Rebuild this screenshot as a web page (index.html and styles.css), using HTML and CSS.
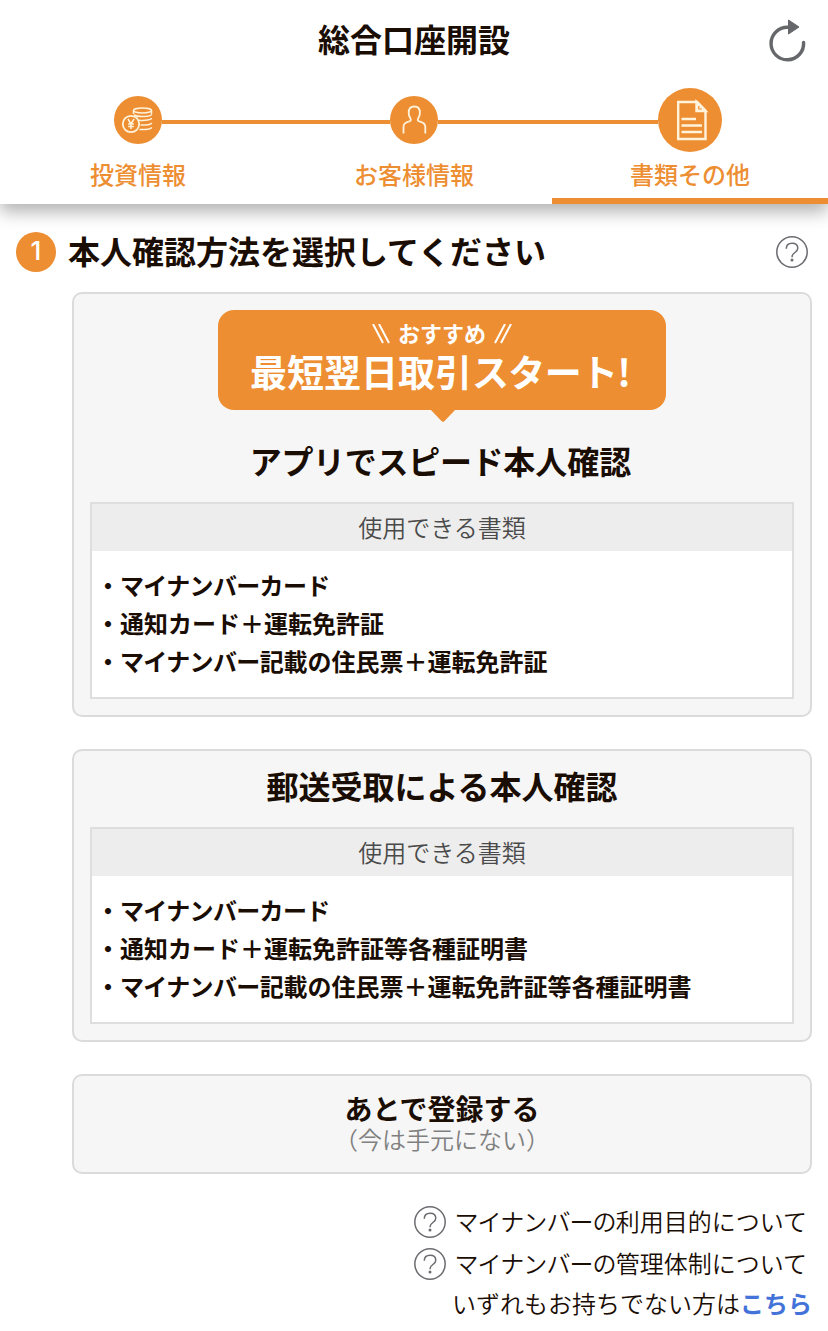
FILE: index.html
```html
<!DOCTYPE html>
<html lang="ja">
<head>
    <meta charset="UTF-8">
    <meta name="viewport" content="width=device-width, initial-scale=1.0">
    <title>総合口座開設</title>
    <link rel="stylesheet" href="styles.css">
</head>
<body>
    <header class="header">
        <h1 class="page-title">総合口座開設</h1>
        <button class="reload-button" aria-label="再読み込み">
            <svg width="40" height="44" viewBox="0 0 40 44">
                <path d="M20 9.200 A16.300 16.300 0 1 0 35.600 24.500" fill="none" stroke="#65676a" stroke-width="3.400" stroke-linecap="round"/>
                <path d="M20.500 2 L31 9 L20.500 16 Z" fill="#65676a" stroke="#65676a" stroke-linejoin="round"/>
            </svg>
        </button>

        <ol class="steps">
            <li class="step">
                <div class="step-marker">
                    <span class="step-circle">
                        <svg width="48" height="48" viewBox="0 0 48 48" fill="none" stroke="#fff3dc" stroke-width="1.5">
                            <ellipse cx="28.5" cy="14.5" rx="9" ry="2.4"/>
                            <path d="M19.500 14.500v3.500M20 19c4 2.300 17.500 1.800 17.500-.8M25 24.300c6 .6 12.500-.4 12.500-2.300M26.500 29c5.500.4 11-.5 11-2.300M25.500 33.500c6 .3 12-.5 12-2.300M37.500 14.500v3.500"/>
                            <circle cx="17" cy="28" r="8.200" stroke-width="1.800"/>
                            <path d="M14 23l3 5 3-5M17 28v5M14.200 28h5.600M14.200 30.500h5.600"/>
                        </svg>
                    </span>
                </div>
                <span class="step-label">投資情報</span>
            </li>
            <li class="step">
                <div class="step-marker">
                    <span class="step-circle">
                        <svg width="48" height="48" viewBox="0 0 48 48" fill="none" stroke="#fff3dc" stroke-width="1.8">
                            <path d="M13.500 37.500v-6.500c0-3.500 2-4.600 5-5.300 2.800-.7 2.900-2 1.500-4.200-1-1.400-1.300-2.700-1.300-4.700 0-3.700 2-6.300 5.600-6.300s5.600 2.600 5.600 6.300c0 2-.3 3.300-1.300 4.700-1.400 2.200-1.300 3.500 1.500 4.200 3 .7 5.200 1.800 5.200 5.300v6.500"/>
                        </svg>
                    </span>
                </div>
                <span class="step-label">お客様情報</span>
            </li>
            <li class="step active">
                <div class="step-marker">
                    <span class="step-circle">
                        <svg width="64" height="64" viewBox="0 0 64 64" fill="none" stroke="#fff3dc" stroke-width="2.4">
                            <path d="M20.200 14h19l8.300 8.500v28.500H20.200Z"/>
                            <path d="M38.500 14v9H47.500Z" fill="#fff3dc"/>
                            <path d="M23.500 31h14.500M23.500 37.500h20.500M23.500 44h20.500"/>
                            <path d="M40.800 18v3h3" stroke="#ed8e32" stroke-width="1.200"/>
                        </svg>
                    </span>
                </div>
                <span class="step-label">書類その他</span>
            </li>
        </ol>
    </header>

    <main class="content">
        <div class="question">
            <span class="question-number">1</span>
            <h2 class="question-title">本人確認方法を選択してください</h2>
            <svg class="help-icon" viewBox="0 0 32 32">
                <circle cx="16" cy="16" r="15.200"/>
                <path d="M10.300 12.800c0-3.400 2.400-5.500 5.800-5.500s5.700 2 5.700 5c0 4.300-5.700 4.100-5.700 8.200v.8"/>
                <circle class="help-dot" cx="16" cy="24" r="1.500"/>
            </svg>
        </div>

        <div class="options">
            <section class="card">
                <div class="banner">
                    <p class="banner-small">
                        <svg width="18" height="20" viewBox="0 0 18 20"><path d="M1 0l10 19M7 0l10 19"/></svg>
                        <span>おすすめ</span>
                        <svg width="18" height="20" viewBox="0 0 18 20"><path d="M11 0L1 19M17 0L7 19"/></svg>
                    </p>
                    <p class="banner-large">最短翌日取引<span class="kana">スタート</span>!</p>
                </div>
                <h3 class="card-title"><span class="kana-title">アプリでスピード</span>本人確認</h3>
                <div class="documents">
                    <div class="documents-head">使用できる書類</div>
                    <ul class="documents-list">
                        <li><span class="kana">マイナンバーカード</span></li>
                        <li>通知カード＋運転免許証</li>
                        <li><span class="kana">マイナンバー</span>記載の住民票＋運転免許証</li>
                    </ul>
                </div>
            </section>

            <section class="card">
                <h3 class="card-title">郵送受取による本人確認</h3>
                <div class="documents">
                    <div class="documents-head">使用できる書類</div>
                    <ul class="documents-list">
                        <li><span class="kana">マイナンバーカード</span></li>
                        <li>通知カード＋運転免許証等各種証明書</li>
                        <li><span class="kana">マイナンバー</span>記載の住民票＋運転免許証等各種証明書</li>
                    </ul>
                </div>
            </section>

            <section class="card card-later">
                <h3 class="later-title">あとで登録する</h3>
                <p class="later-note">（今は手元にない）</p>
            </section>
        </div>

        <div class="links">
            <p class="link-row">
                <svg class="help-icon" viewBox="0 0 32 32">
                    <circle cx="16" cy="16" r="15.200"/>
                    <path d="M10.300 12.800c0-3.400 2.400-5.500 5.800-5.500s5.700 2 5.700 5c0 4.300-5.700 4.100-5.700 8.200v.8"/>
                    <circle class="help-dot" cx="16" cy="24" r="1.500"/>
                </svg>
                <span class="link-text"><span class="kana">マイナンバーの</span>利用目的について</span>
            </p>
            <p class="link-row">
                <svg class="help-icon" viewBox="0 0 32 32">
                    <circle cx="16" cy="16" r="15.200"/>
                    <path d="M10.300 12.800c0-3.400 2.400-5.500 5.800-5.500s5.700 2 5.700 5c0 4.300-5.700 4.100-5.700 8.200v.8"/>
                    <circle class="help-dot" cx="16" cy="24" r="1.500"/>
                </svg>
                <span class="link-text"><span class="kana">マイナンバーの</span>管理体制について</span>
            </p>
            <p class="link-row last">いずれもお持ちでない方は<a href="#">こちら</a></p>
        </div>
    </main>
</body>
</html>
```
FILE: styles.css
```css
* {
    margin: 0;
    padding: 0;
    box-sizing: border-box;
}

body {
    font-family: "Noto Sans CJK JP", sans-serif;
    background: #fff;
    color: #1a0d04;
    min-height: 1331px;
    overflow-x: hidden;
}

ol, ul {
    list-style: none;
}

.kana {
    letter-spacing: -0.65px;
}

/* Header */
.header {
    position: relative;
    height: 204px;
    padding-top: 14px;
    background: #fff;
    box-shadow: 0 8px 16px rgba(0, 0, 0, 0.3);
}

.page-title {
    font-size: 32px;
    font-weight: 700;
    line-height: 48px;
    text-align: center;
}

.reload-button {
    position: absolute;
    top: 18px;
    right: 20px;
    width: 40px;
    height: 44px;
    border: none;
    background: none;
}

.steps {
    display: flex;
    height: 116px;
    margin-top: 26px;
}

.step {
    flex: 1;
    display: flex;
    flex-direction: column;
    align-items: center;
    color: #ed8e32;
}

.step.active {
    border-bottom: 6px solid #ed8e32;
}

.step-marker {
    display: flex;
    align-items: center;
    width: 100%;
    height: 64px;
}

.step-marker::before,
.step-marker::after {
    content: "";
    flex: 1;
    height: 4px;
    margin-top: 4px;
    background: #ed8e32;
}

.step:first-child .step-marker::before,
.step:last-child .step-marker::after {
    background: none;
}

.step-circle {
    width: 48px;
    height: 48px;
    border-radius: 50%;
    background: #ed8e32;
}

.step-circle svg {
    display: block;
}

.step.active .step-circle {
    width: 64px;
    height: 64px;
}

.step-label {
    margin-top: 4px;
    font-size: 24px;
    font-weight: 500;
    line-height: 36px;
}

/* Question */
.content {
    padding: 24px 16px 0;
}

.question {
    display: flex;
    align-items: center;
    height: 48px;
    padding-right: 4px;
}

.question-number {
    width: 40px;
    height: 40px;
    border-radius: 50%;
    background: #ed8e32;
    color: #fff;
    font-family: Inter, sans-serif;
    font-size: 26px;
    font-weight: 500;
    line-height: 38px;
    text-align: center;
}

.question-title {
    flex: 1;
    margin: -4px 0 0 12px;
    font-size: 32px;
    font-weight: 700;
    line-height: 48px;
}

.help-icon {
    width: 32px;
    height: 32px;
    fill: none;
    stroke: #6b6c70;
    stroke-width: 1.5;
}

.help-dot {
    fill: #6b6c70;
    stroke: none;
}

/* Option cards */
.options {
    display: flex;
    flex-direction: column;
    gap: 32px;
    margin: 16px 0 0 56px;
}

.card {
    padding: 16px;
    border: 2px solid #dbdbdb;
    border-radius: 10px;
    background: #f6f6f6;
}

.banner {
    position: relative;
    width: 448px;
    height: 100px;
    margin: 0 auto 26px;
    padding-top: 7px;
    border-radius: 16px;
    background: #ed8e32;
    color: #fff;
    text-align: center;
}

.banner::after {
    content: "";
    position: absolute;
    top: 99px;
    left: 50%;
    width: 26px;
    height: 13px;
    margin-left: -12px;
    background: #ed8e32;
    clip-path: polygon(0 0, 100% 0, 56% 92%, 50% 100%, 44% 92%);
}

.banner-small {
    display: flex;
    align-items: center;
    justify-content: center;
    gap: 8px;
    font-size: 22px;
    font-weight: 700;
    line-height: 30px;
}

.banner-small svg {
    margin-top: 4px;
}

.banner-small path {
    fill: none;
    stroke: #fff;
    stroke-width: 2;
}

.banner-large {
    padding-right: 3px;
    font-size: 37px;
    font-weight: 700;
    line-height: 49px;
}

.card-title {
    margin-bottom: 18px;
    font-size: 32px;
    font-weight: 700;
    line-height: 48px;
    text-align: center;
}

.kana-title {
    margin-left: -3px;
    letter-spacing: -0.3px;
}

.card > .card-title:first-child {
    margin-top: -6px;
}

.documents {
    border: 2px solid #dedede;
    background: #fff;
}

.documents-head {
    height: 47px;
    background: #ededed;
    color: #4a4a4a;
    font-size: 24px;
    font-weight: 350;
    line-height: 45px;
    text-align: center;
}

.documents-list {
    padding: 15px 0 17px 4px;
    font-size: 24px;
    font-weight: 700;
    line-height: 38px;
}

.documents-list li::before {
    content: "・";
}

.card-later {
    height: 100px;
    padding-top: 12px;
    text-align: center;
}

.later-title {
    font-size: 28px;
    font-weight: 700;
    line-height: 40px;
}

.later-note {
    margin-top: -2px;
    color: #808080;
    font-size: 24px;
    font-weight: 350;
    line-height: 26px;
}

/* Bottom links */
.links {
    display: flex;
    flex-direction: column;
    align-items: flex-end;
    margin-top: 27px;
}

.link-row {
    display: flex;
    align-items: center;
    gap: 8px;
    height: 42px;
    margin-right: 5px;
    font-size: 24px;
    font-weight: 350;
}

.link-text {
    padding-bottom: 4px;
}

.link-text .kana {
    letter-spacing: -0.9px;
}

.link-row.last {
    gap: 0;
    height: 35px;
    margin-right: 0;
}

.link-row a {
    color: #4373d9;
    font-weight: 700;
    text-decoration: none;
}
```
